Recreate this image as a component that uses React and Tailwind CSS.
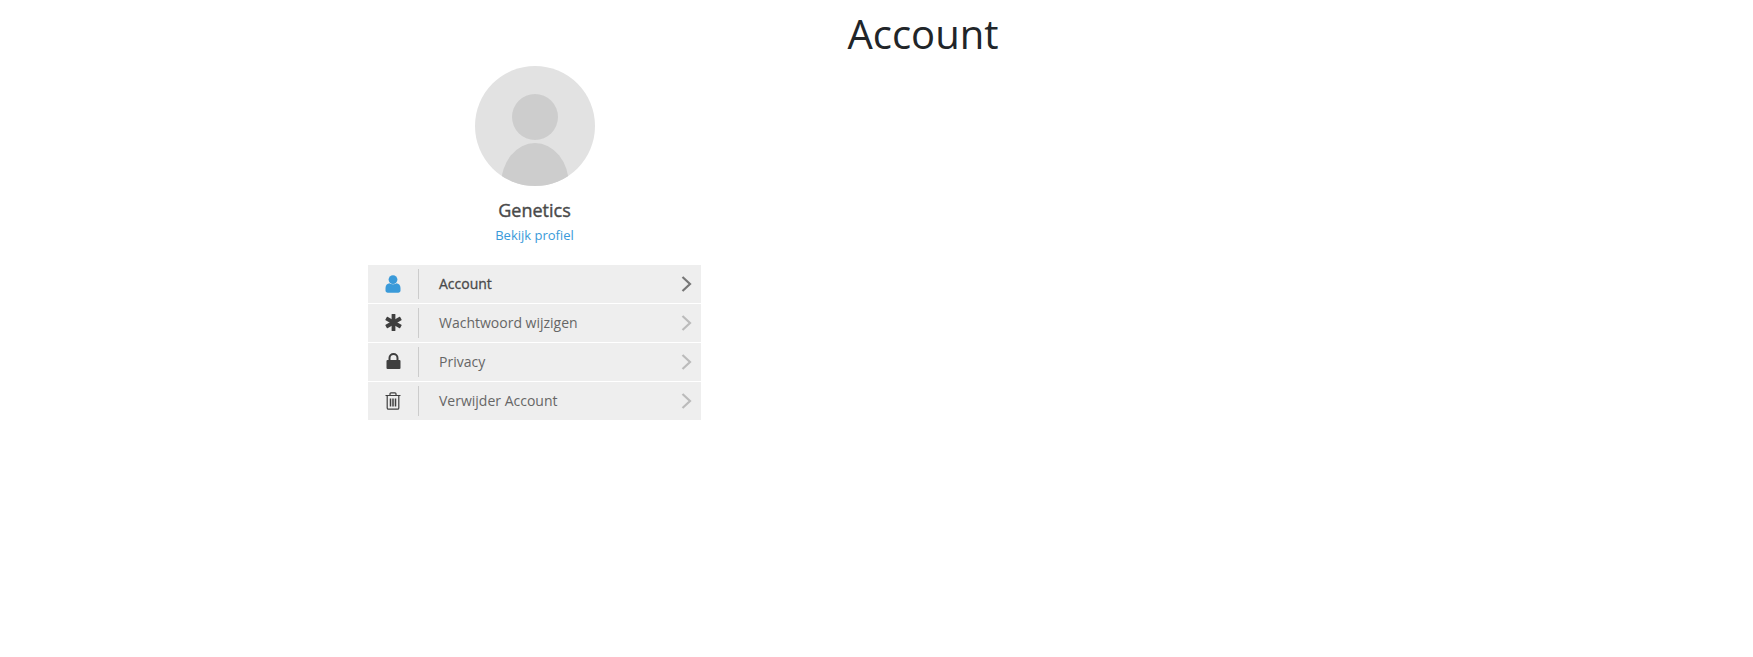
import React from 'react';

const font = { fontFamily: '"Open Sans", sans-serif' };

const UserIcon = () => (
  <svg width="16" height="18" viewBox="0 0 16 18" fill="#3a9ad9">
    <circle cx="8" cy="4.600" r="4.400" />
    <path d="M0.500 13c0-3 2-4.600 4-4.800 1 .8 2.200 1.100 3.500 1.100s2.500-.3 3.500-1.100c2 .2 4 1.800 4 4.800v2.500c0 1.400-1 2.200-2.200 2.200H2.700C1.500 17.700.5 16.900.5 15.500z" />
  </svg>
);

const AsteriskIcon = () => (
  <svg width="17" height="17" viewBox="0 0 17 17" fill="#3f3f3f">
    <rect x="6.600" y="0" width="3.800" height="17" rx="0.500" />
    <rect x="6.600" y="0" width="3.800" height="17" rx="0.500" transform="rotate(60 8.500 8.500)" />
    <rect x="6.600" y="0" width="3.800" height="17" rx="0.500" transform="rotate(120 8.500 8.500)" />
  </svg>
);

const LockIcon = () => (
  <svg width="15" height="17" viewBox="0 0 15 17">
    <path d="M3.500 8V5a4 4 0 0 1 8 0V8" fill="none" stroke="#3f3f3f" strokeWidth="2" />
    <rect x="0.500" y="7" width="14" height="9" rx="1" fill="#3f3f3f" />
  </svg>
);

const TrashIcon = () => (
  <svg width="16" height="18" viewBox="0 0 16 18" fill="none" stroke="#3f3f3f" strokeWidth="1.200">
    <path d="M0.500 3.500h15M5 3.500V1.800c0-.6.400-1 1-1h4c.6 0 1 .4 1 1v1.700" />
    <path d="M2.200 3.500v12.400c0 .8.500 1.300 1.300 1.300h9c.8 0 1.300-.5 1.300-1.300V3.500" />
    <path d="M5.500 6.500v8M8 6.500v8M10.500 6.500v8" strokeWidth="1.500" />
  </svg>
);

const Chevron = ({ color }) => (
  <svg width="11" height="16" viewBox="0 0 11 16" fill="none" stroke={color} strokeWidth="2.200">
    <path d="M1.500 1l7.500 7-7.500 7" />
  </svg>
);

const items = [
  { label: 'Account', icon: <UserIcon />, active: true },
  { label: 'Wachtwoord wijzigen', icon: <AsteriskIcon />, iconClass: 'pb-[2px]' },
  { label: 'Privacy', icon: <LockIcon />, iconClass: 'pb-[2px]' },
  { label: 'Verwijder Account', icon: <TrashIcon /> },
];

export default function App() {
  return (
    <div className="min-h-[657px] bg-white pl-[368px]" style={font}>
      <h1 className="w-[1110px] pt-[10px] text-center text-[40px] leading-[48px] font-normal text-[#212529]">
        Account
      </h1>

      <div className="w-[333px] mt-[8px]">
        {/* Profile */}
        <div className="flex flex-col items-center">
          <div className="relative w-[120px] h-[120px] rounded-full bg-[#e2e2e2] overflow-hidden">
            <div className="absolute left-[37px] top-[28px] w-[46px] h-[46px] rounded-full bg-[#cdcdcd]" />
            <div className="absolute left-[26px] top-[77px] w-[68px] h-[84px] rounded-[50%] bg-[#cdcdcd]" />
          </div>
          <div className="mt-[12px] text-[18px] leading-[24px] font-medium text-[#4a4a4a] [-webkit-text-stroke:0.4px_#4a4a4a]">Genetics</div>
          <a className="mt-[3px] text-[13px] leading-[20px] text-[#3a9ad9]">Bekijk profiel</a>
        </div>

        {/* Menu */}
        <ul className="mt-[20px] flex flex-col gap-px">
          {items.map((item) => (
            <li key={item.label} className="flex items-center h-[38px] bg-[#eeeeee]">
              <div className={`w-[50px] flex justify-center ${item.iconClass || ''}`}>{item.icon}</div>
              <div className="w-px h-[30px] bg-[#cccccc]" />
              <span className={`ml-[20px] flex-1 pb-[2px] text-[14px] ${item.active ? 'font-medium text-[#4a4a4a] [-webkit-text-stroke:0.3px_#4a4a4a]' : 'text-[#666666]'}`}>
                {item.label}
              </span>
              <div className="mr-[9px] flex">
                <Chevron color={item.active ? '#777777' : '#bbbbbb'} />
              </div>
            </li>
          ))}
        </ul>
      </div>
    </div>
  );
}
